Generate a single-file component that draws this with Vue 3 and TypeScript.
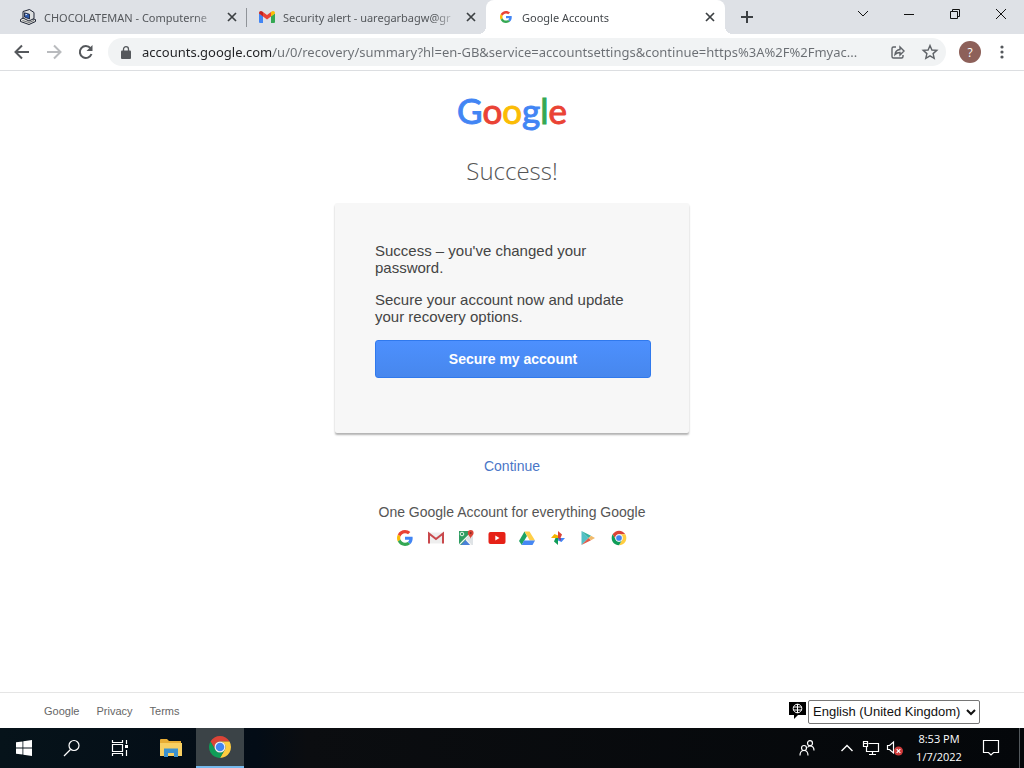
<script setup lang="ts">
import { ref } from 'vue'

interface Tab {
  id: string
  title: string
}

const tabs: Tab[] = [
  { id: 'computer', title: 'CHOCOLATEMAN - Computerne' },
  { id: 'gmail', title: 'Security alert - uaregarbagw@gr' },
  { id: 'google', title: 'Google Accounts' },
]
const activeTab = ref('google')
const address = ref(
  'accounts.google.com/u/0/recovery/summary?hl=en-GB&service=accountsettings&continue=https%3A%2F%2Fmyac...',
)
const language = ref('English (United Kingdom)')
const products = ['Google', 'Gmail', 'Maps', 'YouTube', 'Drive', 'Photos', 'Play', 'Chrome']
const footerLinks = ['Google', 'Privacy', 'Terms']
</script>

<template>
  <div class="screen">
    <svg class="defs" aria-hidden="true">
      <symbol id="g-mark" viewBox="0 0 48 48">
        <path fill="#EA4335" d="M24 9.5c3.54 0 6.71 1.22 9.21 3.6l6.85-6.85C35.9 2.38 30.47 0 24 0 14.62 0 6.51 5.38 2.56 13.22l7.98 6.19C12.43 13.72 17.74 9.5 24 9.5z" />
        <path fill="#4285F4" d="M46.98 24.55c0-1.57-.15-3.09-.38-4.55H24v9.02h12.94c-.58 2.96-2.26 5.48-4.78 7.18l7.73 6c4.51-4.18 7.09-10.36 7.09-17.65z" />
        <path fill="#FBBC05" d="M10.53 28.59c-.48-1.45-.76-2.99-.76-4.59s.27-3.14.76-4.59l-7.98-6.19C.92 16.46 0 20.12 0 24c0 3.88.92 7.54 2.56 10.78l7.97-6.19z" />
        <path fill="#34A853" d="M24 48c6.48 0 11.93-2.13 15.89-5.81l-7.73-6c-2.15 1.45-4.92 2.3-8.16 2.3-6.26 0-11.57-4.22-13.47-9.91l-7.98 6.19C6.51 42.62 14.62 48 24 48z" />
      </symbol>
      <symbol id="chrome-mark" viewBox="0 0 48 48">
        <path fill="#DB4437" d="M4.95 13A22 22 0 0 1 43.05 13L24 13A11 11 0 0 0 14.47 29.5Z" />
        <path fill="#FFCD40" transform="rotate(120 24 24)" d="M4.95 13A22 22 0 0 1 43.05 13L24 13A11 11 0 0 0 14.47 29.5Z" />
        <path fill="#0F9D58" transform="rotate(240 24 24)" d="M4.95 13A22 22 0 0 1 43.05 13L24 13A11 11 0 0 0 14.47 29.5Z" />
        <circle cx="24" cy="24" r="11" fill="#f1f1f1" />
        <circle cx="24" cy="24" r="8.5" fill="#4285F4" />
      </symbol>
    </svg>

    <header class="tabstrip">
      <div class="tabs" role="tablist">
        <div v-for="tab in tabs" :key="tab.id" class="tab" :class="{ active: tab.id === activeTab, [tab.id]: true }">
          <button class="tab-main" role="tab" :aria-selected="tab.id === activeTab" @click="activeTab = tab.id">
            <svg v-if="tab.id === 'computer'" class="favicon" viewBox="0 0 16 16">
              <path d="M.5 10.500L5 8l10.500 2.500v2L9 15.500l-8.500-3z" fill="#e4e4de" stroke="#1c2233" />
              <path d="M3 2.500L9.500.5l4.500 3v6L9 12l-6-3z" fill="#dcdedf" stroke="#1c2233" />
              <path d="M4.500 3.800l5 1.500v4.700l-5-2z" fill="#2c5bb0" stroke="#101830" stroke-width=".8" />
              <path d="M5.500 4.800l2 .6-2 1z" fill="#fff" />
              <path d="M2.500 11.500L9 13.500l5-2" stroke="#50545c" stroke-width=".8" fill="none" />
            </svg>
            <svg v-else-if="tab.id === 'gmail'" class="favicon" viewBox="0 0 16 16">
              <path fill="#4285F4" d="M1 14h3V7L0 4.500V13q0 1 1 1z" />
              <path fill="#34A853" d="M12 14h3q1 0 1-1V4.500L12 7z" />
              <path fill="#EA4335" d="M4 7.500V3l4 3 4-3v4.500l-4 3z" />
              <path fill="#C5221F" d="M0 4.500V4q0-2 2-2 .7 0 1.300.5L4 3v4.500z" />
              <path fill="#FBBC04" d="M12 7.500V3l.7-.5Q13.300 2 14 2q2 0 2 2v.5z" />
            </svg>
            <svg v-else class="favicon small"><use href="#g-mark" /></svg>
            <span class="tab-title">{{ tab.title }}</span>
          </button>
          <button class="tab-close" :aria-label="`Close ${tab.title}`">
            <svg width="10" height="10" viewBox="0 0 10 10"><path d="M1 1l8 8M9 1l-8 8" stroke="#3c4043" stroke-width="1.700" /></svg>
          </button>
        </div>
        <button class="new-tab" aria-label="New tab">
          <svg width="12" height="12" viewBox="0 0 12 12"><path d="M6 0v12M0 6h12" stroke="#3c4043" stroke-width="2" /></svg>
        </button>
      </div>
      <div class="window-controls">
        <button aria-label="Search tabs"><svg width="12" height="12" viewBox="0 0 12 12"><path d="M1 3l5 5 5-5" /></svg></button>
        <button aria-label="Minimise"><svg width="12" height="12" viewBox="0 0 12 12"><path d="M1 6.500h10" /></svg></button>
        <button aria-label="Restore"><svg width="12" height="12" viewBox="0 0 12 12"><path d="M1.500 3.500h7v7h-7zM3.500 3.500v-2h7v7h-2" /></svg></button>
        <button aria-label="Close"><svg width="12" height="12" viewBox="0 0 12 12"><path d="M1 1l10 10M11 1L1 11" /></svg></button>
      </div>
    </header>

    <nav class="toolbar">
      <button class="tool" aria-label="Back"><svg viewBox="0 0 16 16"><path d="M15 8H2M8 1.500L1.500 8 8 14.500" /></svg></button>
      <button class="tool off" aria-label="Forward"><svg viewBox="0 0 16 16"><path d="M1 8h13M8 1.500L14.500 8 8 14.500" /></svg></button>
      <button class="tool" aria-label="Reload"><svg viewBox="0 0 16 16"><path d="M13.500 10A6 6 0 1 1 12.500 4.200" /><path d="M14.500 1v6h-6z" fill="#55585c" stroke="none" /></svg></button>
      <div class="omnibox">
        <svg class="lock" width="10" height="13" viewBox="0 0 10 13">
          <rect y="4.500" width="10" height="8.500" rx="1" fill="#55585c" />
          <path d="M2.500 5V3.200a2.500 2.500 0 0 1 5 0V5" fill="none" stroke="#55585c" stroke-width="1.300" />
        </svg>
        <input v-model="address" class="address" type="text" aria-label="Address" spellcheck="false" />
        <button class="omni-action" aria-label="Share">
          <svg width="16" height="16" viewBox="0 0 16 16"><path d="M6 3H3.500Q2 3 2 4.500v8Q2 14 3.500 14h8q1.500 0 1.500-1.500V11M5 10.500Q5.500 6 10 5.500V3l4 4-4 4V8.500Q7 8.500 5 10.500z" /></svg>
        </button>
        <button class="omni-action" aria-label="Bookmark this page">
          <svg width="16" height="16" viewBox="0 0 16 16"><path d="M8 1.500l1.900 4.500 4.900.4-3.700 3.200 1.100 4.800L8 11.900l-4.200 2.500 1.100-4.800L1.200 6.400 6.100 6z" /></svg>
        </button>
      </div>
      <button class="avatar" aria-label="Profile">?</button>
      <button class="menu" aria-label="Menu">
        <svg width="4" height="14" viewBox="0 0 4 14" fill="#55585c"><circle cx="2" cy="2" r="1.600" /><circle cx="2" cy="7" r="1.600" /><circle cx="2" cy="12" r="1.600" /></svg>
      </button>
    </nav>

    <main class="page">
      <div class="logo" aria-label="Google"><span class="b">G</span><span class="r">o</span><span class="y">o</span><span class="b">g</span><span class="g">l</span><span class="r">e</span></div>
      <h1>Success!</h1>
      <section class="card">
        <p>Success – you've changed your password.</p>
        <p>Secure your account now and update your recovery options.</p>
        <button class="primary">Secure my account</button>
      </section>
      <a class="continue" href="#">Continue</a>
      <p class="tagline">One Google Account for everything Google</p>
      <div class="products">
        <svg v-for="name in products" :key="name" viewBox="0 0 16 16" role="img" :aria-label="name">
          <use v-if="name === 'Google'" href="#g-mark" />
          <g v-else-if="name === 'Gmail'">
            <path fill="#eee" d="M1 2.500h14v11H1z" />
            <path fill="none" stroke="#c9484c" stroke-width="2" d="M1 13.500v-10l7 5.500 7-5.500v10" />
          </g>
          <g v-else-if="name === 'Maps'">
            <path fill="#2f9d62" d="M1 1h14v14H1z" />
            <path fill="#dfe3e6" d="M15 3v12h-2L7.500 9 15 1.500z" />
            <path fill="#4a80d8" d="M3 15l5-5.500L13 15z" />
            <path fill="none" stroke="#f5f5f5" stroke-width="1.200" d="M1 15L12 4M8 9.500l5 5.500" />
            <circle cx="4" cy="4" r="1.800" fill="none" stroke="#e7f4ec" />
            <path fill="#db4437" d="M12.500 9C12.500 6.500 9.800 5.500 9.800 3a2.900 2.900 0 0 1 5.800 0c0 2.500-3.100 3.500-3.100 6z" />
            <circle cx="12.700" cy="3" r="1" fill="#8a2a22" />
          </g>
          <g v-else-if="name === 'YouTube'">
            <rect x="-.5" y="2" width="17" height="12" rx="2" fill="#e62117" />
            <path fill="#fff" d="M6.300 5.500l4.200 2.500-4.200 2.500z" />
          </g>
          <g v-else-if="name === 'Drive'">
            <path fill="#1da362" d="M5.500 1.500L0 11l2.700 4L8 6z" />
            <path fill="#ffcf48" d="M5.500 1.500h5L16 10.500h-5.200z" />
            <path fill="#4688f4" d="M5 10.500h11L13.500 15H2.700z" />
          </g>
          <g v-else-if="name === 'Photos'">
            <path fill="#db4437" d="M8 8V1l4 3.500L10.500 8z" />
            <path fill="#4285f4" d="M8 8h7l-3.500 4L8 10.500z" />
            <path fill="#0f9d58" d="M8 8v7l-4-3.500L5.500 8z" />
            <path fill="#f4b400" d="M8 8H1l3.500-4L8 5.500z" />
            <path fill="#8e3a8c" d="M8 8h3v3z" />
          </g>
          <g v-else-if="name === 'Play'">
            <path fill="#52bfc6" d="M1.500 1v14l7-7z" />
            <path fill="#35b2a0" d="M1.500 1l9.500 4.700L8.500 8z" />
            <path fill="#df5a4a" d="M1.500 15L11 10.300 8.500 8z" />
            <path fill="#f0b96a" d="M11 5.700L15 8l-4 2.300L8.500 8z" />
          </g>
          <use v-else href="#chrome-mark" />
        </svg>
      </div>
    </main>

    <footer class="footer">
      <a v-for="link in footerLinks" :key="link" href="#">{{ link }}</a>
      <label class="lang" for="lang" aria-label="Change language">
        <svg width="17" height="17" viewBox="0 0 17 17">
          <path d="M0 0h17v13h-8l-4 4v-4H0z" />
          <g fill="none" stroke="#fff"><circle cx="8.500" cy="6.500" r="4.300" /><path d="M4.500 5h8M4.500 8h8M8.500 2v9" /></g>
        </svg>
      </label>
      <select id="lang" v-model="language">
        <option>English (United Kingdom)</option>
      </select>
    </footer>

    <div class="taskbar">
      <button class="task" aria-label="Start">
        <svg width="16" height="16" viewBox="0 0 16 16" fill="#fff"><path d="M0 2.300l6.500-.9v6.200H0zM7.300 1.300L16 0v7.600H7.300zM0 8.400h6.500v6.200L0 13.700zM7.300 8.400H16V16l-8.700-1.300z" /></svg>
      </button>
      <button class="task" aria-label="Search">
        <svg class="line" width="18" height="18" viewBox="0 0 18 18"><circle cx="11" cy="6.500" r="5" /><path d="M7.500 10.500L1 17" /></svg>
      </button>
      <button class="task" aria-label="Task view">
        <svg class="line" width="16" height="16" viewBox="0 0 16 16"><path d="M.5 0v2.500h10V0M.5 16v-2.500h10V16M.5 4.500h10v7H.5zM14.500 0v4M14.500 10v6" /><path d="M13 5h3v3h-3z" fill="#fff" stroke="none" /></svg>
      </button>
      <button class="task files" aria-label="File Explorer">
        <svg width="22" height="18" viewBox="0 0 22 18">
          <path fill="#e8ad35" d="M0 1q0-1 1-1h6l2 2h12v15H0z" />
          <path fill="#f8cf62" d="M0 4h22v13H0z" />
          <path fill="#3c91cf" d="M4 9.500h14V18h-4v-4H8v4H4z" />
        </svg>
      </button>
      <button class="task current" aria-label="Google Chrome"><svg width="24" height="24"><use href="#chrome-mark" /></svg></button>
      <div class="tray">
        <button class="people" aria-label="People">
          <svg class="line" width="16" height="16" viewBox="0 0 16 16"><circle cx="5" cy="8" r="2.500" /><path d="M1 15.500q0-5 4-5t4 5" /><circle cx="11" cy="3.200" r="2.500" /><path d="M8.500 7.500q1-1.500 2.500-1.500 4 0 4 4.500" /></svg>
        </button>
        <button aria-label="Show hidden icons"><svg class="line" width="14" height="14" viewBox="0 0 14 14"><path d="M1.500 10L7 4.500 12.500 10" stroke-width="1.400" /></svg></button>
        <button aria-label="Network">
          <svg class="line" width="16" height="14" viewBox="0 0 16 14"><path d="M5.500 2.500h10v8H3.500V6M6 13.500h7M9.500 10.500v3M.5.500h4v5h-4zM1 2.500h3" /></svg>
        </button>
        <button aria-label="Volume">
          <svg class="line" width="16" height="16" viewBox="0 0 16 16"><path d="M.5 5.500h2L6.500 2v11l-4-3.500h-2z" /><circle cx="11.500" cy="11" r="4.500" fill="#cf3b3b" stroke="none" /><path d="M9.700 9.200l3.600 3.600M13.300 9.200l-3.600 3.600" /></svg>
        </button>
        <button class="clock"><span>8:53 PM</span><span>1/7/2022</span></button>
        <button class="notes" aria-label="Notifications">
          <svg class="line" width="16" height="16" viewBox="0 0 16 16"><path d="M.5.500h15v12h-5L8 15l-2.500-2.500h-5z" /></svg>
        </button>
        <button class="desktop" aria-label="Show desktop"></button>
      </div>
    </div>
  </div>
</template>

<style>
body { margin: 0; }
</style>

<style scoped>
* { box-sizing: border-box; }
button { border: 0; padding: 0; background: none; font: inherit; color: inherit; }
button, label { display: flex; align-items: center; justify-content: center; }
svg { display: block; flex: none; overflow: visible; }
p, h1 { margin: 0; }
.defs { width: 0; height: 0; position: absolute; }
.screen { min-height: 100vh; display: flex; flex-direction: column; background: #fff; font-family: "Liberation Sans", Arial, sans-serif; }

.tabstrip { height: 34px; display: flex; justify-content: space-between; background: #dee1e6; font: 11px "Noto Sans", sans-serif; color: #54575b; }
.tabs { flex: 1; display: flex; min-width: 0; padding-left: 8px; }
.tab { position: relative; flex: 0 1 239px; min-width: 0; display: flex; align-items: center; padding: 0 10px 0 12px; }
.tab.computer::after { content: ""; position: absolute; right: 0; top: 8px; width: 1px; height: 19px; background: #909499; }
.tab.active { background: #fff; color: #45494d; border-radius: 8px 8px 0 0; }
.tab.active::before, .tab.active::after { content: ""; position: absolute; bottom: 0; width: 8px; height: 8px; }
.tab.active::before { left: -8px; background: radial-gradient(circle at 0 0, transparent 8px, #fff 8px); }
.tab.active::after { right: -8px; background: radial-gradient(circle at 100% 0, transparent 8px, #fff 8px); }
.tab-main { flex: 1; min-width: 0; height: 34px; justify-content: flex-start; gap: 8px; }
.favicon { width: 16px; height: 16px; }
.favicon.small { padding: 2px; }
.tab-title { flex: 1; min-width: 0; overflow: hidden; white-space: nowrap; text-align: left; -webkit-mask-image: linear-gradient(90deg, #000 86%, transparent); mask-image: linear-gradient(90deg, #000 86%, transparent); }
.tab-close { width: 10px; height: 20px; margin-left: 8px; }
.new-tab { width: 28px; margin-left: 8px; }
.window-controls { display: flex; }
.window-controls button { width: 46px; height: 28px; }
.window-controls svg { fill: none; stroke: #111; stroke-width: 1; }

.toolbar { height: 37px; display: flex; align-items: center; padding: 0 11px 0 6px; border-bottom: 1px solid #dcdee1; font-family: "Open Sans", sans-serif; }
.tool { width: 32px; height: 32px; }
.tool svg { width: 16px; height: 16px; fill: none; stroke: #55585c; stroke-width: 2; }
.tool.off svg { stroke: #b9bbbe; }
.omnibox { flex: 1; min-width: 0; height: 28px; display: flex; align-items: center; margin-left: 6px; padding: 0 8px 0 13px; border-radius: 14px; background: #f1f3f4; }
.lock { margin-right: 11px; }
.address { flex: 1; min-width: 0; height: 28px; padding: 0; border: 0; outline: 0; font: 13px "Noto Sans", "Open Sans", sans-serif; color: transparent; background: linear-gradient(90deg, #202124 131px, #6a6e73 131px); -webkit-background-clip: text; background-clip: text; }
.omni-action { width: 32px; height: 28px; }
.omni-action svg { fill: none; stroke: #5f6368; stroke-width: 1.400; }
.omni-action + .omni-action { margin-right: -8px; }
.avatar { width: 22px; height: 22px; margin-left: 13px; border-radius: 50%; background: #8d6059; color: #fff; font-size: 12px; }
.menu { width: 22px; height: 28px; margin-left: 10px; }

.page { flex: 1; display: flex; flex-direction: column; align-items: center; }
.logo { margin-top: 15px; font: 35px/48px Lato, sans-serif; }
.logo span { -webkit-text-stroke: 1px currentColor; }
.b { color: #4285f4; } .r { color: #ea4335; } .y { color: #fbbc05; } .g { color: #34a853; }
h1 { margin-top: 20px; font: 300 24px/34px "Open Sans", sans-serif; color: #555; }
.card { width: 354px; max-width: 100%; margin-top: 15px; padding: 39px 38px 55px 40px; border-radius: 2px; background: #f7f7f7; box-shadow: 0 2px 2px rgba(0, 0, 0, 0.3); }
.card p { margin-bottom: 15px; font-size: 15px; line-height: 17px; color: #444; }
.card .primary { width: 100%; height: 38px; margin-top: 14px; border: 1px solid #3079ed; border-radius: 3px; background: linear-gradient(#4d90fe, #4787ed); color: #fff; font-size: 14px; font-weight: 700; }
.continue { margin-top: 25px; font-size: 14px; line-height: 16px; color: #4a76c7; text-decoration: none; }
.tagline { margin-top: 30px; font-size: 14px; line-height: 16px; color: #555; }
.products { width: 230px; display: flex; justify-content: space-between; margin-top: 10px; }
.products svg { width: 16px; height: 16px; }

.footer { height: 36px; display: flex; align-items: center; padding: 0 44px; border-top: 1px solid #e5e5e5; font-size: 11px; }
.footer a { margin-right: 17px; color: #666; text-decoration: none; }
.lang { margin-left: auto; margin-right: 2px; }
select { width: 172px; height: 24px; margin-top: 2px; border: 1px solid #767676; border-radius: 2px; padding: 0; background: #fff; color: #111; font: 13px "Liberation Sans", Arial, sans-serif; }

.taskbar { height: 40px; display: flex; background: linear-gradient(90deg, #06131a, #030c16 25%, #0b0d10 30%, #04070a); color: #fff; font: 11px "Open Sans", sans-serif; }
.task { width: 48px; height: 40px; }
.files { margin-left: 4px; padding-right: 2px; }
.current { background: #3b4347; border-bottom: 2px solid #76b9ed; }
.line { fill: none; stroke: #fff; stroke-width: 1.200; }
.tray { margin-left: auto; display: flex; }
.tray button { width: 24px; }
.tray .people { margin-right: 16px; }
.tray .clock { width: 64px; flex-direction: column; line-height: 18px; }
.tray .notes { width: 40px; }
.tray .desktop { width: 5px; margin-left: 8px; border-left: 1px solid #53595d; }
</style>
